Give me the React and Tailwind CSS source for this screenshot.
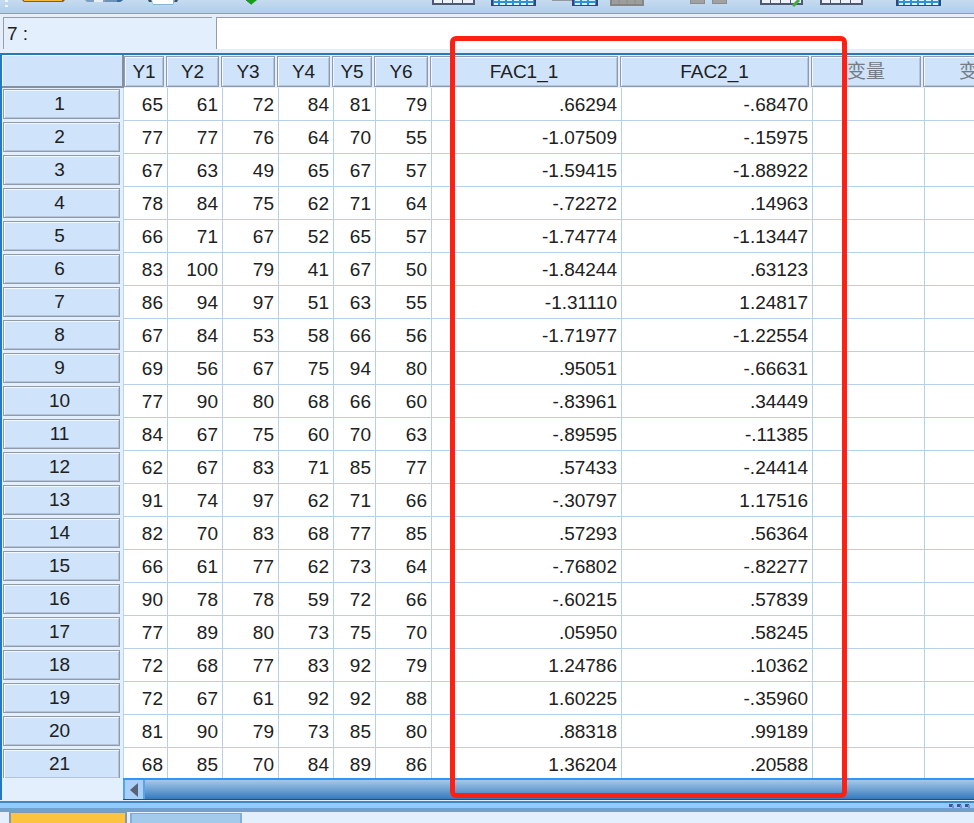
import React from "react";

const columns = [
  { name: "Y1", width: "w-[44px]" },
  { name: "Y2", width: "w-[55px]" },
  { name: "Y3", width: "w-[56px]" },
  { name: "Y4", width: "w-[55px]" },
  { name: "Y5", width: "w-[42px]" },
  { name: "Y6", width: "w-[56px]" },
  { name: "FAC1_1", width: "w-[190px]" },
  { name: "FAC2_1", width: "w-[191px]" },
  { name: "变量", width: "w-[112px]", unused: true },
  { name: "变量", width: "w-[112px]", unused: true },
];

const rows = [
  ["65", "61", "72", "84", "81", "79", ".66294", "-.68470"],
  ["77", "77", "76", "64", "70", "55", "-1.07509", "-.15975"],
  ["67", "63", "49", "65", "67", "57", "-1.59415", "-1.88922"],
  ["78", "84", "75", "62", "71", "64", "-.72272", ".14963"],
  ["66", "71", "67", "52", "65", "57", "-1.74774", "-1.13447"],
  ["83", "100", "79", "41", "67", "50", "-1.84244", ".63123"],
  ["86", "94", "97", "51", "63", "55", "-1.31110", "1.24817"],
  ["67", "84", "53", "58", "66", "56", "-1.71977", "-1.22554"],
  ["69", "56", "67", "75", "94", "80", ".95051", "-.66631"],
  ["77", "90", "80", "68", "66", "60", "-.83961", ".34449"],
  ["84", "67", "75", "60", "70", "63", "-.89595", "-.11385"],
  ["62", "67", "83", "71", "85", "77", ".57433", "-.24414"],
  ["91", "74", "97", "62", "71", "66", "-.30797", "1.17516"],
  ["82", "70", "83", "68", "77", "85", ".57293", ".56364"],
  ["66", "61", "77", "62", "73", "64", "-.76802", "-.82277"],
  ["90", "78", "78", "59", "72", "66", "-.60215", ".57839"],
  ["77", "89", "80", "73", "75", "70", ".05950", ".58245"],
  ["72", "68", "77", "83", "92", "79", "1.24786", ".10362"],
  ["72", "67", "61", "92", "92", "88", "1.60225", "-.35960"],
  ["81", "90", "79", "73", "85", "80", ".88318", ".99189"],
  ["68", "85", "70", "84", "89", "86", "1.36204", ".20588"],
];

function Tool({ label, className, width, children }) {
  return (
    <button type="button" aria-label={label} className={`block shrink-0 ${className}`}>
      <svg width={width} height="7" viewBox={`0 0 ${width} 7`}>
        {children}
      </svg>
    </button>
  );
}

function WhiteGrid() {
  return (
    <>
      <path d="M0 0H43V5H0Z" fill="#4c5874" />
      <path d="M2 0H10V3H2ZM11 0H20V3H11ZM21 0H30V3H21ZM31 0H41V3H31Z" fill="#eef1f8" />
    </>
  );
}

function BlueGrid() {
  return (
    <>
      <path d="M0 0H45V6H0Z" fill="#384577" />
      <path d="M2 0H43V5H2Z" fill="#2f8fdc" />
      <path d="M3 0H7V1H3ZM9 0H14V1H9ZM16 0H21V1H16ZM23 0H28V1H23ZM30 0H35V1H30ZM37 0H42V1H37ZM3 3H7V5H3ZM9 3H14V5H9ZM16 3H21V5H16ZM23 3H28V5H23ZM30 3H35V5H30ZM37 3H42V5H37Z" fill="#e2f2fd" />
    </>
  );
}

function Toolbar() {
  return (
    <div role="toolbar" aria-label="工具栏" className="flex h-[13px] items-start overflow-hidden bg-linear-to-b from-[#c5dbf0] to-[#b1cde9]">
      <Tool label="工具栏手柄" className="ml-1" width={5}>
        <path d="M1 0H4V2H1ZM1 5H4V7H1Z" fill="#edf4fb" />
      </Tool>
      <Tool label="打开" className="ml-[13px]" width={43}>
        <path d="M0 0H43L41 2H2Z" fill="#93551a" />
        <path d="M2 0H40V1H2Z" fill="#f4b83e" />
      </Tool>
      <Tool label="保存" className="ml-5" width={38}>
        <path d="M0 0H38L35 2H2Z" fill="#7ca0c4" />
        <path d="M9 0H18V2H9Z" fill="#e7eef4" />
        <path d="M20 0H38L35 2H20Z" fill="#6d92b6" />
        <path d="M32 0H38L35 2H32Z" fill="#356b9c" />
      </Tool>
      <Tool label="打印" className="ml-[25px]" width={30}>
        <path d="M0 0H4V2H1ZM26 0H30L29 2H26Z" fill="#404e61" />
        <path d="M3 0H27L25 5H5Z" fill="#86b6dc" />
        <path d="M4 0H25V4H5Z" fill="#fff" />
      </Tool>
      <Tool label="转到" className="ml-[67px]" width={13}>
        <path d="M1 0H12L7 4H6Z" fill="#11a018" />
        <path d="M1 0L6 4H7" fill="none" stroke="#278232" />
      </Tool>
      <Tool label="插入个案" className="ml-[174px]" width={43}><WhiteGrid /></Tool>
      <Tool label="插入变量" className="ml-4" width={45}><BlueGrid /></Tool>
      <Tool label="拆分文件" className="ml-4" width={46}>
        <path d="M0 0H20V1H0Z" fill="#93999d" />
        <path d="M20 0H46V6H20Z" fill="#384577" />
        <path d="M22 0H44V5H22Z" fill="#2f8fdc" />
        <path d="M23 0H28V1H23ZM30 0H35V1H30ZM37 0H43V1H37ZM23 3H28V5H23ZM30 3H35V5H30ZM37 3H43V5H37Z" fill="#d5ecfc" />
      </Tool>
      <Tool label="加权个案" className="ml-3" width={34}>
        <path d="M0 0H34V6H0Z" fill="#858585" />
        <path d="M2 0H32V4H2Z" fill="#9d9d9d" />
        <path d="M9 0V4M17 0V4M25 0V4" stroke="#8b8b8b" />
      </Tool>
      <Tool label="选择个案" className="ml-[46px]" width={37}>
        <path d="M0 0H15V4H0ZM22 0H37V4H22Z" fill="#898c90" />
        <path d="M1 0H14V3H1ZM23 0H36V3H23Z" fill="#a1a1a1" />
      </Tool>
      <Tool label="值标签" className="ml-[33px]" width={43}>
        <WhiteGrid />
        <path d="M39 0L33 6" stroke="#46a944" strokeWidth="3" />
      </Tool>
      <Tool label="使用变量集" className="ml-[17px]" width={43}><WhiteGrid /></Tool>
      <Tool label="显示所有变量" className="ml-[33px]" width={45}><BlueGrid /></Tool>
    </div>
  );
}

const box = "border border-[#8f9bac] bg-[#cfe3fb] text-center font-normal shadow-[inset_1px_1px_0_#f2f8ff,inset_-1px_-1px_0_#b3c4d8]";

export default function App() {
  return (
    <div className="relative w-full overflow-hidden bg-[#e3effc] font-['Liberation_Sans','Noto_Sans_CJK_SC',sans-serif] text-[19px] text-[#202020]">
      <Toolbar />
      <div className="flex h-10 gap-1 border-t border-[#999da3] pt-[3px] pb-1 pl-[3px]">
        <input aria-label="单元格" readOnly value="7 :" className="h-8 w-[209px] border-t border-l border-[#999da3] bg-[#e3effc] px-[3px] outline-none" />
        <input aria-label="单元格值" className="h-8 min-w-0 flex-1 border-t border-l border-[#999da3] bg-white px-1 outline-none" />
      </div>
      <div className="overflow-hidden border-t-2 border-l-2 border-[#2478c2]">
        <div className="h-[723px] overflow-hidden">
          <table className="w-[1035px] table-fixed border-separate border-spacing-0">
            <thead>
              <tr>
                <td className="h-[33px] w-[122px] border-r-2 border-b-2 border-[#858f9e] bg-[#cfe3fb] p-0 shadow-[inset_1px_1px_0_#f2f8ff]" />
                {columns.map((column, index) => (
                  <th key={index} scope="col" className={`h-[33px] p-0 pt-px pr-1 align-top ${column.width}`}>
                    <div className={`h-[31px] leading-[30px] ${box} ${index > 0 ? "-ml-0.5" : ""} ${column.unused ? "text-[#747b84]" : ""}`}>{column.name}</div>
                  </th>
                ))}
              </tr>
            </thead>
            <tbody>
              {rows.map((row, rowIndex) => (
                <tr key={rowIndex}>
                  <th scope="row" className="h-[33px] border-r border-[#bdd5ec] p-0 pt-px pr-[3px] pl-px align-top">
                    <div className={`h-[30px] pr-1 leading-[28px] ${box}`}>{rowIndex + 1}</div>
                  </th>
                  {columns.map((column, index) => (
                    <td key={index} className="h-[33px] border-r border-b border-[#b6d0e9] bg-white p-0 pt-px pr-1 text-right leading-[31px]">
                      {row[index]}
                    </td>
                  ))}
                </tr>
              ))}
            </tbody>
          </table>
        </div>
        <div className="ml-[121px] flex h-[22px] border-t-2 border-b border-t-[#3295f5] border-b-[#17528c] bg-linear-to-b from-[#a5c9e8] to-[#347abd]">
          <button type="button" aria-label="向左滚动" className="flex w-[22px] items-center justify-center border-x-2 border-[#55a4f4] bg-[#a9cffb]">
            <svg width="8" height="14" viewBox="0 0 8 14">
              <path d="M8 0V14L0 7Z" fill="#586473" />
            </svg>
          </button>
        </div>
      </div>
      <div className="mt-px flex h-[11px] items-center justify-end border-t-2 border-b-4 border-t-[#4087c4] border-b-[#71a0ce] bg-[#94c9fc]">
        <svg className="mr-1" width="21" height="5" viewBox="0 0 21 5">
          <path d="M0 1H4V4H0ZM8 1H12V4H8ZM16 1H20V4H16Z" fill="#3b5799" />
          <path d="M3 2H5V5H3ZM11 2H13V5H11ZM19 2H21V5H19Z" fill="#7995bd" />
        </svg>
      </div>
      <div role="tablist" className="flex h-[11px] gap-[3px] pl-[9px]">
        <button type="button" role="tab" aria-selected="true" aria-label="数据视图" className="w-[118px] border-x-2 border-t border-[#8499ad] bg-[#fcc33e]" />
        <button type="button" role="tab" aria-selected="false" aria-label="变量视图" className="mt-px w-[112px] border-x-2 border-t border-[#83add3] bg-[#a3caeb]" />
      </div>
      <div className="pointer-events-none absolute top-9 left-[450px] h-[762px] w-[397px] rounded-md border-5 border-[#ff2013]" />
    </div>
  );
}
